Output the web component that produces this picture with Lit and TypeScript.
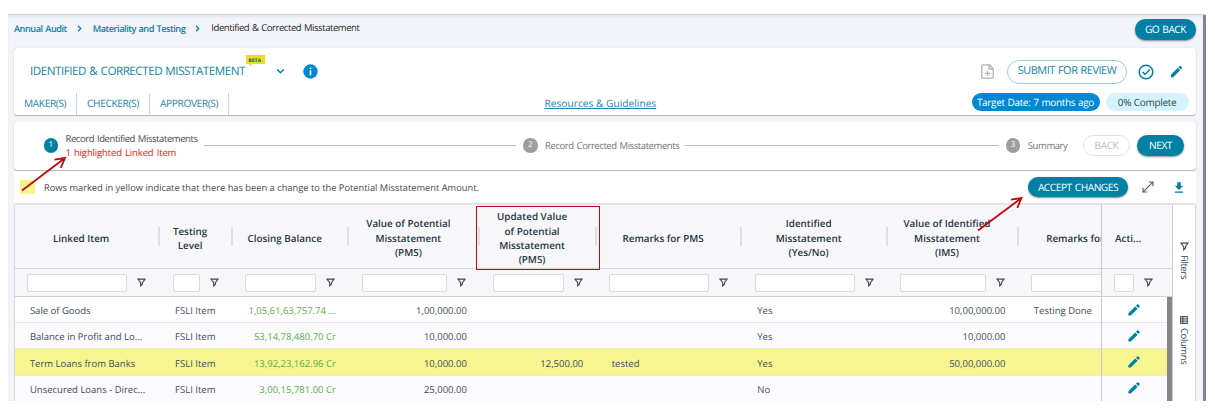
import { LitElement, html, css, svg } from "lit";
import { customElement } from "lit/decorators.js";
import { classMap } from "lit/directives/class-map.js";

interface Column {
  key: string;
  title: string[];
  width: number;
  right?: boolean;
}

const columns: Column[] = [
  { key: "item", title: ["Linked Item"], width: 145.2 },
  { key: "level", title: ["Testing", "Level"], width: 72.8 },
  { key: "balance", title: ["Closing Balance"], width: 116.4, right: true },
  { key: "pms", title: ["Value of Potential", "Misstatement", "(PMS)"], width: 131, right: true },
  { key: "updated", title: ["Updated Value", "of Potential", "Misstatement", "(PMS)"], width: 116.4, right: true },
  { key: "remarksPms", title: ["Remarks for PMS"], width: 145.6 },
  { key: "identified", title: ["Identified", "Misstatement", "(Yes/No)"], width: 145.6 },
  { key: "ims", title: ["Value of Identified", "Misstatement", "(IMS)"], width: 131, right: true },
  { key: "remarksIms", title: ["Remarks for IMS"], width: 145.6 },
];

const rows: Record<string, string>[] = [
  { item: "Sale of Goods", level: "FSLI Item", balance: "1,05,61,63,757.74 ...", pms: "1,00,000.00", identified: "Yes", ims: "10,00,000.00", remarksIms: "Testing Done" },
  { item: "Balance in Profit and Lo...", level: "FSLI Item", balance: "53,14,78,480.70 Cr", pms: "10,000.00", identified: "Yes", ims: "10,000.00" },
  { item: "Term Loans from Banks", level: "FSLI Item", balance: "13,92,23,162.96 Cr", pms: "10,000.00", updated: "12,500.00", remarksPms: "tested", identified: "Yes", ims: "50,00,000.00", changed: "1" },
  { item: "Unsecured Loans - Direc...", level: "FSLI Item", balance: "3,00,15,781.00 Cr", pms: "25,000.00", identified: "No" },
];

const funnel = html`<svg class="funnel" width="9" height="9" viewBox="0 0 9 9">
  <path d="M0.9 1.1H8.1L5.4 4.6V6.2L3.7 7.9V4.6Z" fill="none" stroke="currentColor" stroke-width="1.1" />
</svg>`;

const pencil = (size: number) => html`<svg width=${size} height=${size} viewBox="0 0 24 24" fill="#0080a3">
  <path d="M3 17.25V21h3.75L17.81 9.94l-3.75-3.75L3 17.25zM20.71 7.04c.39-.39.39-1.02 0-1.41l-2.34-2.34c-.39-.39-1.02-.39-1.41 0l-1.83 1.83 3.75 3.75 1.83-1.83z" />
</svg>`;

const rowPencil = html`<svg width="12" height="12" viewBox="0 0 12 12" fill="#0080a3">
  <path d="M0.4 11.6V9.2L7.2 2.4L9.6 4.8L2.8 11.6ZM8 1.7L9.2.5Q9.8 0 10.4.5L11.5 1.6Q12 2.2 11.5 2.8L10.3 4Z" />
</svg>`;

const arrow = (tx: number, ty: number, fx: number, fy: number) => svg`
  <path d="M${fx} ${fy}L${tx} ${ty}M${tx - 10.5} ${ty + 1.6}L${tx} ${ty}L${tx - 4.2} ${ty + 9.8}" />`;

@customElement("app-root")
export class AppRoot extends LitElement {
  static styles = css`
    :host { display: block; position: relative; width: 1215px; height: 410px; overflow: hidden; background: #fff; font-family: "Open Sans", sans-serif; font-size: 9.5px; color: #333; text-rendering: geometricPrecision; }
    * { box-sizing: border-box; }
    svg { display: block; flex: none; }
    .frame { margin: 14px 0 0 8px; width: 1198px; height: 387px; display: flex; background: #f3f4fa; border-top: 1px solid #cfced4; box-shadow: inset 0 2px 2px #e6e6ec; overflow: hidden; }
    .page { width: 1195px; padding: 0 7px 0 6px; }
    .bar { width: 3px; background: #868686; }
    .crumbs { height: 33px; display: flex; align-items: flex-start; padding-top: 6px; color: #262626; white-space: nowrap; line-height: 13px; letter-spacing: -.43px; word-spacing: .7px; }
    .crumb { color: #0f7d9f; font-weight: 600; font-size: 9.2px; letter-spacing: -.47px; padding-top: 1px; }
    .sep { margin: 4px 11px 0 10px; }
    .btn { display: flex; align-items: center; justify-content: center; border-radius: 12px; background: #0080a3; color: #fff; font-size: 10.2px; letter-spacing: -.47px; word-spacing: .8px; height: 21px; white-space: nowrap; box-shadow: 0 1px 2px rgba(0,0,0,.45); padding-bottom: 1px; }
    .goback { margin: -2px 0 0 auto; width: 61px; }
    .card { background: #fff; border-radius: 3px; box-shadow: 0 1px 1px rgba(0,0,0,.25), 0 0 1px rgba(0,0,0,.2); }
    .head { height: 67px; }
    .title-row { height: 45px; display: flex; align-items: center; padding: 2px 12px 0 16px; color: #1083a6; }
    .title { font-size: 11.6px; letter-spacing: -.45px; word-spacing: .7px; white-space: nowrap; }
    .beta { align-self: flex-start; margin: 4px 0 0 1px; }
    .betatext { font-size: 5px; font-weight: 800; letter-spacing: .1px; fill: #117a70; }
    .down { margin: 0 18px 0 11px; }
    .adddoc { margin-left: auto; margin-right: 13px; }
    .submit { width: 120px; height: 24px; border: 1px solid #9ccddb; background: #fff; color: #1083a6; box-shadow: none; font-size: 10.9px; letter-spacing: -.45px; margin-right: 11px; padding-bottom: 2px; }
    .tick { margin-right: 15px; }
    .tabs { height: 22px; display: flex; color: #1d86a8; font-size: 10.2px; letter-spacing: -.4px; line-height: 21px; white-space: nowrap; padding: 0 7.5px 0 0; }
    .tab { border-right: 1px solid #b9dbe5; padding: 0 10px; }
    .tab.m { width: 63px; } .tab.c { width: 73px; } .tab.a { width: 79px; }
    .link { margin-left: 315.5px; letter-spacing: 0; text-decoration: underline; text-decoration-thickness: 1px; text-underline-offset: 1px; line-height: 20px; }
    .pill { border-radius: 9px; height: 18px; line-height: 18px; text-align: center; font-size: 10px; letter-spacing: -.33px; word-spacing: .5px; }
    .target { width: 128px; background: #0288d1; color: #fff; margin-left: auto; margin-right: 6px; }
    .done { width: 83px; background: #d3f4fd; color: #33474e; }
    .steps { margin-top: 7px; height: 48px; display: flex; align-items: center; padding: 0 12px 1px 29.5px; white-space: nowrap; letter-spacing: -.42px; word-spacing: .8px; color: #757575; }
    .num { width: 14.5px; height: 14.5px; border-radius: 50%; background: #9e9e9e; color: #fff; text-align: center; font-size: 8px; line-height: 14.5px; letter-spacing: 0; margin-right: 7.5px; flex: none; }
    .num.on { background: #0080a3; }
    .label { line-height: 13.6px; }
    .label.on { color: #4a4a4a; }
    .red { color: #ff1010; letter-spacing: -.14px; }
    .line { height: 1px; background: #bdbdbd; }
    .l1 { width: 312.5px; margin: 0 7px 0 6px; } .l2 { width: 313.5px; margin: 0 7px 0 6px; }
    .back { width: 47px; background: #fff; color: #bdbdbd; border: 1px solid #e2e2e2; box-shadow: none; margin-left: auto; margin-right: 7px; }
    .next { width: 47px; }
    .legend { margin-top: 1px; height: 32px; background: #fff; display: flex; align-items: center; padding: 0 12px 0 6px; color: #484848; white-space: nowrap; font-size: 9.31px; }
    .swatch { width: 15px; height: 14px; background: #f7f48c; margin-right: 9px; }
    .accept { width: 100px; height: 20px; margin: 0 13.5px 0 auto; font-size: 10.2px; }
    .expand { margin-right: 20.5px; }
    .grid { height: 200px; display: flex; border: 1px solid #d5d6de; border-top: 2px solid #e2e2e9; border-bottom: 0; border-radius: 3px 3px 0 0; background: #fff; color: #3c4b5a; width: 1182px; }
    .table { flex: none; width: 1086px; overflow: hidden; }
    .pinned { flex: none; width: 71px; border-left: 1px solid #c5c8cf; }
    .hrow { display: flex; height: 64px; background: #f7f7fa; border-bottom: 1px solid #d3d5db; color: #263644; font-weight: 600; font-size: 9.85px; line-height: 14.4px; width: max-content; }
    .hcell { display: flex; flex: none; align-items: center; height: 63px; text-align: center; white-space: nowrap; }
    .htext { flex: 1; padding: 3px 11px 0 0; }
    .hcell::after { content: ""; width: 2px; height: 19px; background: #dfe0e6; }
    .frow { display: flex; height: 28px; background: #f7f7fa; border-bottom: 1px solid #cfd1d8; width: max-content; }
    .fcell { display: flex; flex: none; align-items: center; padding: 0 14px 0 12.4px; gap: 10px; }
    .input { flex: 1; height: 18px; border: 1px solid #d8dae0; border-radius: 2px; background: #fff; }
    .funnel { color: #3b4a5a; }
    .row { display: flex; height: 26.2px; background: #fbfbfd; border-bottom: 1px solid #e4e6ec; width: max-content; line-height: 26.2px; white-space: nowrap; }
    .row.first { background: #fff; }
    .row.changed { background: #f7f590; }
    .cell { flex: none; padding: 1.3px 13.5px 0 14.9px; }
    .first .cell { padding-top: .6px; }
    .right { text-align: right; }
    .green { color: #5cad4a; }
    .pinned .hrow, .pinned .frow { width: 100%; }
    .ptext { padding: 26px 0 0 13px; }
    .pinned .row { width: 65px; padding: 6.6px 0 0 25.5px; }
    .body { display: flex; }
    .vscroll { width: 6px; height: 106px; background: #868686; }
    .pinned .fcell { width: 65px; padding-right: 14px; }
    .side { width: 23px; border-left: 1px solid #c9ccd4; background: #fff; padding-top: 37px; display: flex; flex-direction: column; align-items: center; }
    .tabside { display: flex; align-items: center; gap: 4px; writing-mode: vertical-rl; letter-spacing: -.4px; color: #3c4b5a; font-size: 9.5px; line-height: 10px; }
    .filters { height: 74px; }
    .notes { position: absolute; left: 0; top: 0; pointer-events: none; }
  `;

  header() {
    return html`
      <div class="crumbs">
        <span class="crumb">Annual Audit</span>
        <svg class="sep" width="5" height="7" viewBox="0 0 5 7" fill="none" stroke="#0f7d9f" stroke-width="1.2"><path d="M1 .8L3.8 3.5L1 6.2" /></svg>
        <span class="crumb">Materiality and Testing</span>
        <svg class="sep" width="5" height="7" viewBox="0 0 5 7" fill="none" stroke="#0f7d9f" stroke-width="1.2"><path d="M1 .8L3.8 3.5L1 6.2" /></svg>
        <span>Identified &amp; Corrected Misstatement</span>
        <div class="btn goback">GO BACK</div>
      </div>
      <div class="card head">
        <div class="title-row">
          <span class="title">IDENTIFIED &amp; CORRECTED MISSTATEMENT</span>
          <svg class="beta" width="19" height="14" viewBox="0 0 19 14">
            <path d="M0 1H19V10H6.5L3.5 12.5V10H0Z" fill="#f2dc14" />
            <text class="betatext" x="2.2" y="7.5">BETA</text>
          </svg>
          <svg class="down" width="9" height="7" viewBox="0 0 9 7" fill="none" stroke="#0080a3" stroke-width="1.5"><path d="M1.2 1.5L4.5 4.8L7.8 1.5" /></svg>
          <svg width="15" height="15" viewBox="0 0 15 15"><circle cx="7.5" cy="7.5" r="7.2" fill="#0288d1" /><path d="M6.7 3.5H8.3V5.1H6.7ZM6.7 6.2H8.3V11.3H6.7Z" fill="#fff" /></svg>
          <svg class="adddoc" width="13" height="15" viewBox="0 0 13 15" fill="none" stroke="#b3b3b3" stroke-width="1.3"><path d="M8.3 .8H2Q.8 .8 .8 2V13Q.8 14.2 2 14.2H11Q12.2 14.2 12.2 13V4.7ZM8 .8V5H12M6.5 6.8V12M3.9 9.4H9.1" /></svg>
          <div class="btn submit">SUBMIT FOR REVIEW</div>
          <svg class="tick" width="16" height="16" viewBox="0 0 16 16" fill="none" stroke="#0080a3" stroke-width="1.5"><circle cx="8" cy="8" r="6.8" /><path d="M4.6 8L7 10.4L11.8 5.5" /></svg>
          ${pencil(15)}
        </div>
        <div class="tabs">
          <div class="tab m">MAKER(S)</div>
          <div class="tab c">CHECKER(S)</div>
          <div class="tab a">APPROVER(S)</div>
          <span class="link">Resources &amp; Guidelines</span>
          <div class="pill target">Target Date: 7 months ago</div>
          <div class="pill done">0% Complete</div>
        </div>
      </div>`;
  }

  steps() {
    return html`
      <div class="card steps">
        <span class="num on">1</span>
        <div class="label on">Record Identified Misstatements<div class="red">1 highlighted Linked Item</div></div>
        <div class="line l1"></div>
        <span class="num">2</span><span class="label">Record Corrected Misstatements</span>
        <div class="line l2"></div>
        <span class="num">3</span><span class="label">Summary</span>
        <div class="btn back">BACK</div>
        <div class="btn next">NEXT</div>
      </div>
      <div class="legend">
        <span class="swatch"></span>
        <span>Rows marked in yellow indicate that there has been a change to the Potential Misstatement Amount.</span>
        <div class="btn accept">ACCEPT CHANGES</div>
        <svg class="expand" width="12" height="12" viewBox="0 0 12 12" fill="none" stroke="#606060" stroke-width="1.2"><path d="M1.2 10.8L10.8 1.2M6.8 1H11V5.2M1 6.8V11H5.2" /></svg>
        <svg width="10" height="11" viewBox="0 0 10 11" fill="#0080a3"><path d="M3.2 .3H6.8V3.8H9.2L5 8L.8 3.8H3.2ZM.8 9.4H9.2V10.8H.8Z" /></svg>
      </div>`;
  }

  grid() {
    return html`
      <div class="grid">
        <div class="table">
          <div class="hrow">
            ${columns.map((c) => html`<div class="hcell" style="width:${c.width}px">
              <div class="htext">${c.title.map((line) => html`<div>${line}</div>`)}</div>
            </div>`)}
          </div>
          <div class="frow">
            ${columns.map((c) => html`<div class="fcell" style="width:${c.width}px"><div class="input"></div>${funnel}</div>`)}
          </div>
          ${rows.map((r, i) => html`<div class=${classMap({ row: true, first: i === 0, changed: !!r.changed })}>
            ${columns.map((c) => html`<div class=${classMap({ cell: true, right: !!c.right, green: c.key === "balance" })} style="width:${c.width}px">${r[c.key] ?? ""}</div>`)}
          </div>`)}
        </div>
        <div class="pinned">
          <div class="hrow"><div class="ptext">Acti...</div></div>
          <div class="frow"><div class="fcell"><div class="input"></div>${funnel}</div></div>
          <div class="body">
            <div>${rows.map((r, i) => html`<div class=${classMap({ row: true, first: i === 0, changed: !!r.changed })}>${rowPencil}</div>`)}</div>
            <div class="vscroll"></div>
          </div>
        </div>
        <div class="side">
          <div class="tabside filters">${funnel}<span>Filters</span></div>
          <div class="tabside">
            <svg width="8" height="8" viewBox="0 0 8 8" fill="none" stroke="#3b4a5a"><path d="M.5 .5H7.5V7.5H.5ZM.5 2.2H7.5M.5 4H7.5M.5 5.8H7.5M3 .5V7.5" stroke-width=".9" /></svg>
            <span>Columns</span>
          </div>
        </div>
      </div>`;
  }

  render() {
    return html`
      <div class="frame">
        <div class="page">${this.header()}${this.steps()}${this.grid()}</div>
        <div class="bar"></div>
      </div>
      <svg class="notes" width="1215" height="410" viewBox="0 0 1215 410" fill="none" stroke="#c00a10" stroke-width="1.8">
        ${arrow(65, 158, 22, 190.5)}${arrow(1021.5, 198, 978, 230.5)}
        <rect x="476.5" y="206.5" width="123" height="63" stroke-width="1" />
      </svg>`;
  }
}
